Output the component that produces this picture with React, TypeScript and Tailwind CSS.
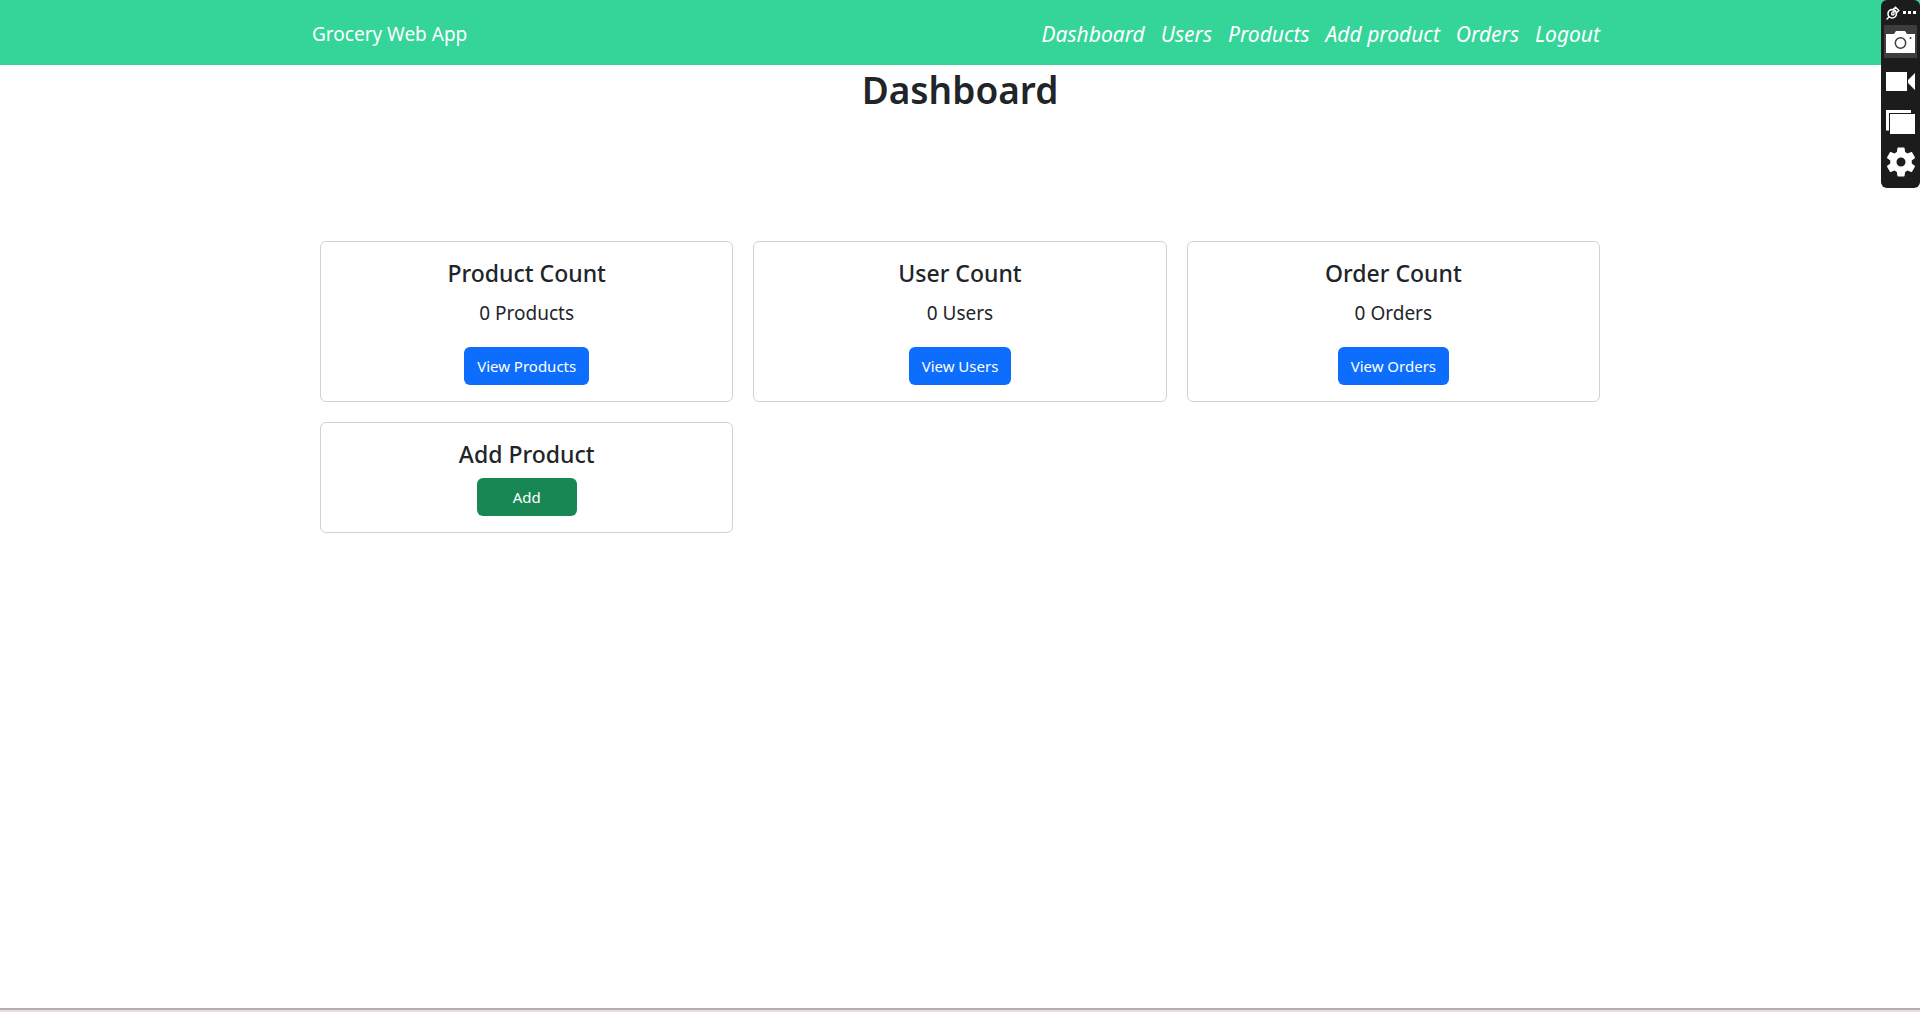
import type { ReactNode } from "react";

type CountCard = { title: string; text: string; action: string; href: string };

const links = ["Dashboard", "Users", "Products", "Add product", "Orders", "Logout"];

const counts: CountCard[] = [
  { title: "Product Count", text: "0 Products", action: "View Products", href: "#products" },
  { title: "User Count", text: "0 Users", action: "View Users", href: "#users" },
  { title: "Order Count", text: "0 Orders", action: "View Orders", href: "#orders" },
];

function Card({ title, children }: { title: string; children: ReactNode }) {
  return (
    <section className="flex flex-col items-center rounded-md border border-[#d2d2d3] bg-white p-4">
      <h2 className="mb-2 text-[23px] leading-[31px] font-medium">{title}</h2>
      {children}
    </section>
  );
}

function ToolButton({ label, active = false, children }: { label: string; active?: boolean; children: ReactNode }) {
  return (
    <button
      type="button"
      aria-label={label}
      className={`flex h-[33px] w-[33px] items-center justify-center ${active ? "bg-[#3d3d3d]" : ""}`}
    >
      {children}
    </button>
  );
}

function CaptureToolbar() {
  return (
    <aside
      aria-label="Capture tools"
      className="fixed top-0 right-0 flex w-[39px] flex-col items-center rounded-md bg-[#1c1c1c] pb-[10px]"
    >
      <div className="flex h-[25px] w-full items-center justify-center gap-[3px]">
        <button type="button" aria-label="Pin toolbar">
          <svg width="14" height="14" viewBox="0 0 14 14" fill="none" stroke="#fff" strokeLinecap="round">
            <path d="M1 13l2-2" strokeWidth="1.500" />
            <circle cx="6.200" cy="7.800" r="4.200" strokeWidth="1.600" />
            <path d="M7 3.600L9.500 1.200L12.800 4.500L10.300 7M9.500 4.500L7 6C5.500 6.500 5 8.500 6.500 9C7.800 9.200 8.300 8 8 7" strokeWidth="1.400" />
          </svg>
        </button>
        <button type="button" aria-label="More options">
          <svg width="13" height="3" viewBox="0 0 13 3" fill="#fff">
            <path d="M0 0h3v3H0zM5 0h3v3H5zM10 0h3v3h-3z" />
          </svg>
        </button>
      </div>
      <div className="flex flex-col gap-[7px]">
        <ToolButton label="Take screenshot" active>
          <svg width="29" height="22" viewBox="0 0 29 22">
            <path d="M0 3h8l2-3h9l2 3h8v19H0z" fill="#fff" />
            <circle cx="14.500" cy="12" r="5.200" fill="none" stroke="#3d3d3d" strokeWidth="1.500" />
            <circle cx="24.500" cy="7" r="1" fill="#3d3d3d" />
          </svg>
        </ToolButton>
        <ToolButton label="Record video">
          <svg width="29" height="19" viewBox="0 0 29 19" fill="#fff">
            <path d="M0 0h21v19H0zM22 8l7-7v17l-7-7z" />
          </svg>
        </ToolButton>
        <ToolButton label="Open gallery">
          <svg width="29" height="24" viewBox="0 0 29 24" fill="#fff">
            <path d="M0 0h25v3H3v17.500H0zM4 4h25v20H4z" />
          </svg>
        </ToolButton>
        <ToolButton label="Settings">
          <svg width="36" height="36" viewBox="0 0 24 24" fill="#fff" className="shrink-0">
            <path d="M19.140 12.940c.04-.3.060-.61.060-.94 0-.32-.02-.64-.07-.94l2.030-1.580a.49.49 0 0 0 .12-.61l-1.920-3.320a.488.488 0 0 0-.59-.22l-2.390.96c-.5-.38-1.030-.7-1.620-.94l-.36-2.540a.484.484 0 0 0-.48-.41h-3.840c-.24 0-.43.17-.47.41l-.36 2.540c-.59.24-1.130.57-1.620.94l-2.390-.96c-.22-.08-.47 0-.59.22L2.740 8.870c-.12.21-.08.47.12.61l2.030 1.580c-.05.3-.09.63-.09.94s.02.64.07.94l-2.030 1.580a.49.49 0 0 0-.12.61l1.920 3.320c.12.22.37.29.59.22l2.390-.96c.5.38 1.030.7 1.620.94l.36 2.540c.05.24.24.41.48.41h3.840c.24 0 .44-.17.47-.41l.36-2.540c.59-.24 1.130-.56 1.620-.94l2.390.96c.22.08.47 0 .59-.22l1.920-3.320c.12-.22.07-.47-.12-.61l-2.010-1.580zM12 15a3 3 0 1 1 0-6 3 3 0 0 1 0 6z" />
          </svg>
        </ToolButton>
      </div>
    </aside>
  );
}

export default function App() {
  return (
    <div className="flex min-h-screen flex-col bg-white font-['Noto_Sans','Open_Sans',sans-serif] text-[#212529]">
      <header className="bg-[#35d59a] text-white">
        <div className="mx-auto flex h-[65px] max-w-[1320px] items-center justify-between pt-[2px] pr-5 pl-3">
          <a href="#home" className="text-[19px] leading-[30px]">Grocery Web App</a>
          <nav aria-label="Main" className="flex gap-4 text-[21px] leading-[30px] italic">
            {links.map((link) => (
              <a key={link} href={`#${link.toLowerCase().replace(" ", "-")}`}>{link}</a>
            ))}
          </nav>
        </div>
      </header>

      <main className="mx-auto w-full max-w-[1320px] flex-1 px-5">
        <h1 className="mb-[126px] text-center text-[37px] leading-[50px] font-semibold">Dashboard</h1>
        <div className="grid grid-cols-1 gap-5 md:grid-cols-3">
          {counts.map((card) => (
            <Card key={card.title} title={card.title}>
              <p className="mb-[18px] text-[19px] leading-8">{card.text}</p>
              <a href={card.href} className="rounded-md bg-[#0d6efd] px-[13px] py-[7px] text-[15px] leading-6 text-white">
                {card.action}
              </a>
            </Card>
          ))}
          <Card title="Add Product">
            <a href="#add-product" className="w-[100px] rounded-md bg-[#198754] py-[7px] text-center text-[15px] leading-6 text-white">
              Add
            </a>
          </Card>
        </div>
      </main>

      <div className="h-1 border-t-2 border-[#b5adb0] bg-[#e8dde0]" />
      <CaptureToolbar />
    </div>
  );
}
